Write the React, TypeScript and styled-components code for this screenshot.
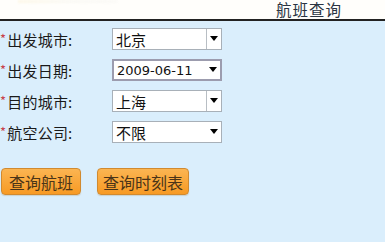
import React from "react";
import styled, { createGlobalStyle } from "styled-components";

const Global = createGlobalStyle`
  html, body { margin: 0; padding: 0; }
  body {
    width: 385px;
    height: 242px;
    overflow: hidden;
    background: #daeefc;
    font-family: "Noto Sans CJK SC", "Noto Sans", sans-serif;
  }
`;

const Page = styled.div`
  width: 385px;
  height: 242px;
  display: flex;
  flex-direction: column;
  background: #daeefc;
`;

const Header = styled.header`
  height: 19px;
  background: #fffefb;
  border-bottom: 2px solid #222;
  display: flex;
  align-items: center;
  justify-content: space-between;
  padding: 0 43px 0 18px;
  box-sizing: content-box;
`;

const Smudge = styled.div`
  width: 100px;
  height: 3px;
  align-self: flex-start;
  background: linear-gradient(90deg, rgba(250,232,180,0.25), rgba(240,240,232,0.3), rgba(235,235,235,0.2));
  filter: blur(1px);
`;

const Title = styled.h1`
  margin: -1px 0 0 0;
  font-size: 15.5px;
  font-weight: 400;
  color: #2a3442;
  line-height: 15px;
  letter-spacing: 1px;
`;

const Form = styled.form`
  display: flex;
  flex-direction: column;
  gap: 9px;
  padding: 7px 0 0 0;
`;

const Row = styled.div`
  display: grid;
  grid-template-columns: 112px 110px;
  align-items: center;
  height: 22px;
`;

const Label = styled.label`
  font-size: 15px;
  color: #1a1a1a;
  letter-spacing: 0.2px;
  white-space: nowrap;
`;

const Star = styled.span`
  color: #c8424a;
  font-size: 13px;
  margin-right: 1px;
  vertical-align: 2px;
`;

const SelectBox = styled.div<{ $focused?: boolean }>`
  height: 22px;
  box-sizing: border-box;
  border: ${(p) => (p.$focused ? "2px solid #9c9cae" : "1px solid #a8b0b8")};
  background: #fff;
  display: flex;
  align-items: stretch;
`;

const Value = styled.span<{ $latin?: boolean }>`
  flex: 1;
  display: flex;
  align-items: center;
  padding-left: 3px;
  font-family: ${(p) =>
    p.$latin ? '"DejaVu Sans", sans-serif' : '"Noto Sans CJK SC", sans-serif'};
  font-size: ${(p) => (p.$latin ? "13px" : "15px")};
  color: #111;
`;

const ArrowCell = styled.span<{ $divider?: boolean }>`
  width: 14px;
  border-left: ${(p) => (p.$divider ? "1px solid #b8bec4" : "1px solid transparent")};
  display: flex;
  align-items: center;
  justify-content: center;
`;

const Arrow = styled.span`
  width: 0;
  height: 0;
  border-left: 4px solid transparent;
  border-right: 4px solid transparent;
  border-top: 5px solid #000;
  margin-top: -2px;
`;

const Buttons = styled.div`
  display: flex;
  gap: 16px;
  margin-top: 16px;
  padding-left: 1px;
`;

const Button = styled.button<{ $w: number }>`
  width: ${(p) => p.$w}px;
  height: 27px;
  box-sizing: border-box;
  border: 1px solid #d18a30;
  border-radius: 4px;
  background: linear-gradient(#fbb552, #f79a24);
  color: #4a3418;
  font-family: "Noto Sans CJK SC", sans-serif;
  font-size: 16px;
  padding: 0;
  display: flex;
  align-items: center;
  justify-content: center;
  box-shadow: 0 1px 1px rgba(160, 120, 60, 0.25);
`;

const fields = [
  { label: "出发城市:", value: "北京", divider: true },
  { label: "出发日期:", value: "2009-06-11", latin: true, focused: true, divider: false },
  { label: "目的城市:", value: "上海", divider: true },
  { label: "航空公司:", value: "不限", divider: false },
];

export default function App() {
  return (
    <Page>
      <Global />
      <Header>
        <Smudge />
        <Title>航班查询</Title>
      </Header>
      <Form>
        {fields.map((f) => (
          <Row key={f.label}>
            <Label>
              <Star>*</Star>
              {f.label}
            </Label>
            <SelectBox $focused={f.focused}>
              <Value $latin={f.latin}>{f.value}</Value>
              <ArrowCell $divider={f.divider}>
                <Arrow />
              </ArrowCell>
            </SelectBox>
          </Row>
        ))}
        <Buttons>
          <Button type="button" $w={80}>查询航班</Button>
          <Button type="button" $w={92}>查询时刻表</Button>
        </Buttons>
      </Form>
    </Page>
  );
}
